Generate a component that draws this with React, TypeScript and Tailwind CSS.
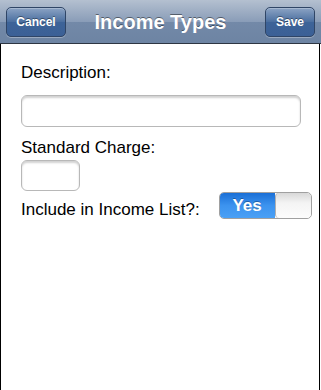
const navBtn =
  'h-[30px] rounded-[5px] border border-[#2f4566] bg-[linear-gradient(#8ba3c4,#4a6e9f_50%,#3d6398_51%,#3b6096)] px-[9px] text-[12px] font-bold text-white shadow-[inset_0_1px_0_rgba(255,255,255,0.25),0_1px_0_rgba(255,255,255,0.3)] [text-shadow:0_-1px_0_rgba(0,0,0,0.4)]';

const field =
  'rounded-[6px] border border-[#b8b8b8] bg-white shadow-[inset_0_2px_2px_rgba(0,0,0,0.18)]';

export default function App() {
  return (
    <div className="h-[390px] w-[321px] overflow-hidden bg-white font-['Liberation_Sans',Arial,sans-serif]">
      <div className="grid h-[44px] grid-cols-[1fr_auto_1fr] items-center border-b border-[#2d3642] bg-[linear-gradient(#b4c0d0,#8a9db8_50%,#7389a8_51%,#6d84a3)] px-[6px]">
        <button className={`${navBtn} w-[60px] justify-self-start`}>Cancel</button>
        <h1 className="text-[20px] font-bold text-white [text-shadow:0_-1px_0_rgba(0,0,0,0.45)]">Income Types</h1>
        <button className={`${navBtn} w-[50px] justify-self-end`}>Save</button>
      </div>
      <div className="mr-[1px] h-[346px] border-l border-r border-black pl-[20px] pt-[19px] text-[17px] text-black">
        <label className="block leading-[20px]">Description:</label>
        <div className={`${field} mt-[12px] h-[32px] w-[280px]`} />
        <label className="mt-[11px] block leading-[20px]">Standard Charge:</label>
        <div className={`${field} mt-[2px] h-[31px] w-[59px]`} />
        <div className="flex items-start">
          <label className="mt-[9px] leading-[20px]">Include in Income List?:</label>
          <div className="ml-[19px] mt-[1px] flex h-[27px] w-[93px] overflow-hidden rounded-[5px] border border-[#a0a0a0]">
            <div className="flex w-[55px] items-center justify-center bg-[linear-gradient(#1a6fd6,#3c93ef_50%,#4aa0f5)] text-[17px] font-bold text-white [text-shadow:0_-1px_0_rgba(0,0,0,0.3)]">
              Yes
            </div>
            <div className="flex-1 rounded-[4px] border-l border-[#b0b0b0] bg-[linear-gradient(#d8d8d8,#f4f4f4_40%,#fcfcfc)]" />
          </div>
        </div>
      </div>
    </div>
  );
}
